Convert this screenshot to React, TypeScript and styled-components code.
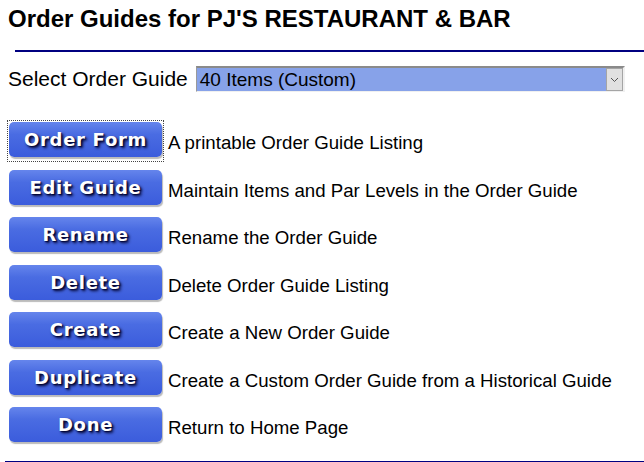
import React from "react";
import styled, { createGlobalStyle } from "styled-components";

const GlobalStyle = createGlobalStyle`
  html, body {
    margin: 0;
    padding: 0;
    background: #ffffff;
    font-family: "Liberation Sans", Arial, sans-serif;
    color: #000000;
  }
`;

const Page = styled.div`
  width: 644px;
  height: 462px;
  overflow: hidden;
  display: flex;
  flex-direction: column;
`;

const Header = styled.div`
  height: 50px;
  padding-left: 8px;
  box-sizing: border-box;
  h1 {
    margin: 0;
    padding-top: 5px;
    font-size: 24px;
    line-height: 28px;
    font-weight: 700;
  }
`;

const Rule = styled.div<{ $left: number; $thick: number }>`
  margin-left: ${(p) => p.$left}px;
  height: ${(p) => p.$thick}px;
  background: #000080;
`;

const SelectRow = styled.div`
  margin-top: 14px;
  padding-left: 8px;
  display: flex;
  align-items: center;
  height: 26px;
  label {
    font-size: 21px;
    margin-right: 8px;
    white-space: nowrap;
  }
`;

const SelectBox = styled.div`
  box-sizing: border-box;
  width: 429px;
  height: 26px;
  display: flex;
  align-items: center;
  background: #87a2e9;
  border-top: 2px solid #8a8a8a;
  border-left: 1px solid #9a9a9a;
  border-bottom: 1px solid #f0f0f0;
  border-right: 2px solid #f0f0f0;
  .value {
    flex: 1;
    padding-left: 3px;
    font-size: 19px;
    white-space: nowrap;
  }
`;

const ArrowBox = styled.div`
  box-sizing: border-box;
  width: 17px;
  height: 23px;
  background: #e1e1e1;
  border: 1px solid #a5a5a5;
  display: flex;
  align-items: center;
  justify-content: center;
`;

const ActionList = styled.div`
  margin-top: 28px;
  padding-left: 7px;
  display: grid;
  grid-auto-rows: 47.5px;
`;

const Row = styled.div`
  display: flex;
  align-items: flex-start;
`;

const ButtonWrap = styled.div<{ $focused?: boolean }>`
  box-sizing: border-box;
  width: 157px;
  height: 42px;
  padding: 1px;
  border: 1px dotted ${(p) => (p.$focused ? "#444" : "transparent")};
`;

const GuideButton = styled.button`
  box-sizing: border-box;
  width: 153px;
  height: 35px;
  padding: 0;
  border: none;
  border-radius: 5px;
  background: linear-gradient(#6585ec 0%, #4a6ce2 35%, #3b5cdc 100%);
  box-shadow: 1px 2px 1px rgba(60, 60, 60, 0.35);
  color: #ffffff;
  font-family: "DejaVu Sans", Verdana, sans-serif;
  font-weight: 700;
  font-size: 18px;
  letter-spacing: 0.7px;
  line-height: 35px;
  text-shadow: 2px 2px 3px #000028, 1px 1px 1px #101a60;
  cursor: pointer;
`;

const Desc = styled.div`
  margin-left: 4px;
  padding-top: 12px;
  font-size: 18.67px;
  white-space: nowrap;
`;

const BottomRule = styled.div`
  margin-top: auto;
  margin-left: 5px;
  height: 1px;
  background: #000080;
`;

const actions = [
  { label: "Order Form", desc: "A printable Order Guide Listing" },
  { label: "Edit Guide", desc: "Maintain Items and Par Levels in the Order Guide" },
  { label: "Rename", desc: "Rename the Order Guide" },
  { label: "Delete", desc: "Delete Order Guide Listing" },
  { label: "Create", desc: "Create a New Order Guide" },
  { label: "Duplicate", desc: "Create a Custom Order Guide from a Historical Guide" },
  { label: "Done", desc: "Return to Home Page" },
];

const App = () => {
  return (
    <>
      <GlobalStyle />
      <Page>
        <Header>
          <h1>Order Guides for PJ'S RESTAURANT &amp; BAR</h1>
        </Header>
        <Rule $left={15} $thick={2} />
        <SelectRow>
          <label>Select Order Guide</label>
          <SelectBox>
            <div className="value">40 Items (Custom)</div>
            <ArrowBox>
              <svg width="9" height="6" viewBox="0 0 9 6">
                <path d="M1 1 L4.5 4.5 L8 1" fill="none" stroke="#555" strokeWidth="1" />
              </svg>
            </ArrowBox>
          </SelectBox>
        </SelectRow>
        <ActionList>
          {actions.map((a, idx) => (
            <Row key={idx}>
              <ButtonWrap $focused={idx === 0}>
                <GuideButton>{a.label}</GuideButton>
              </ButtonWrap>
              <Desc>{a.desc}</Desc>
            </Row>
          ))}
        </ActionList>
        <BottomRule />
      </Page>
    </>
  );
};

export default App;
